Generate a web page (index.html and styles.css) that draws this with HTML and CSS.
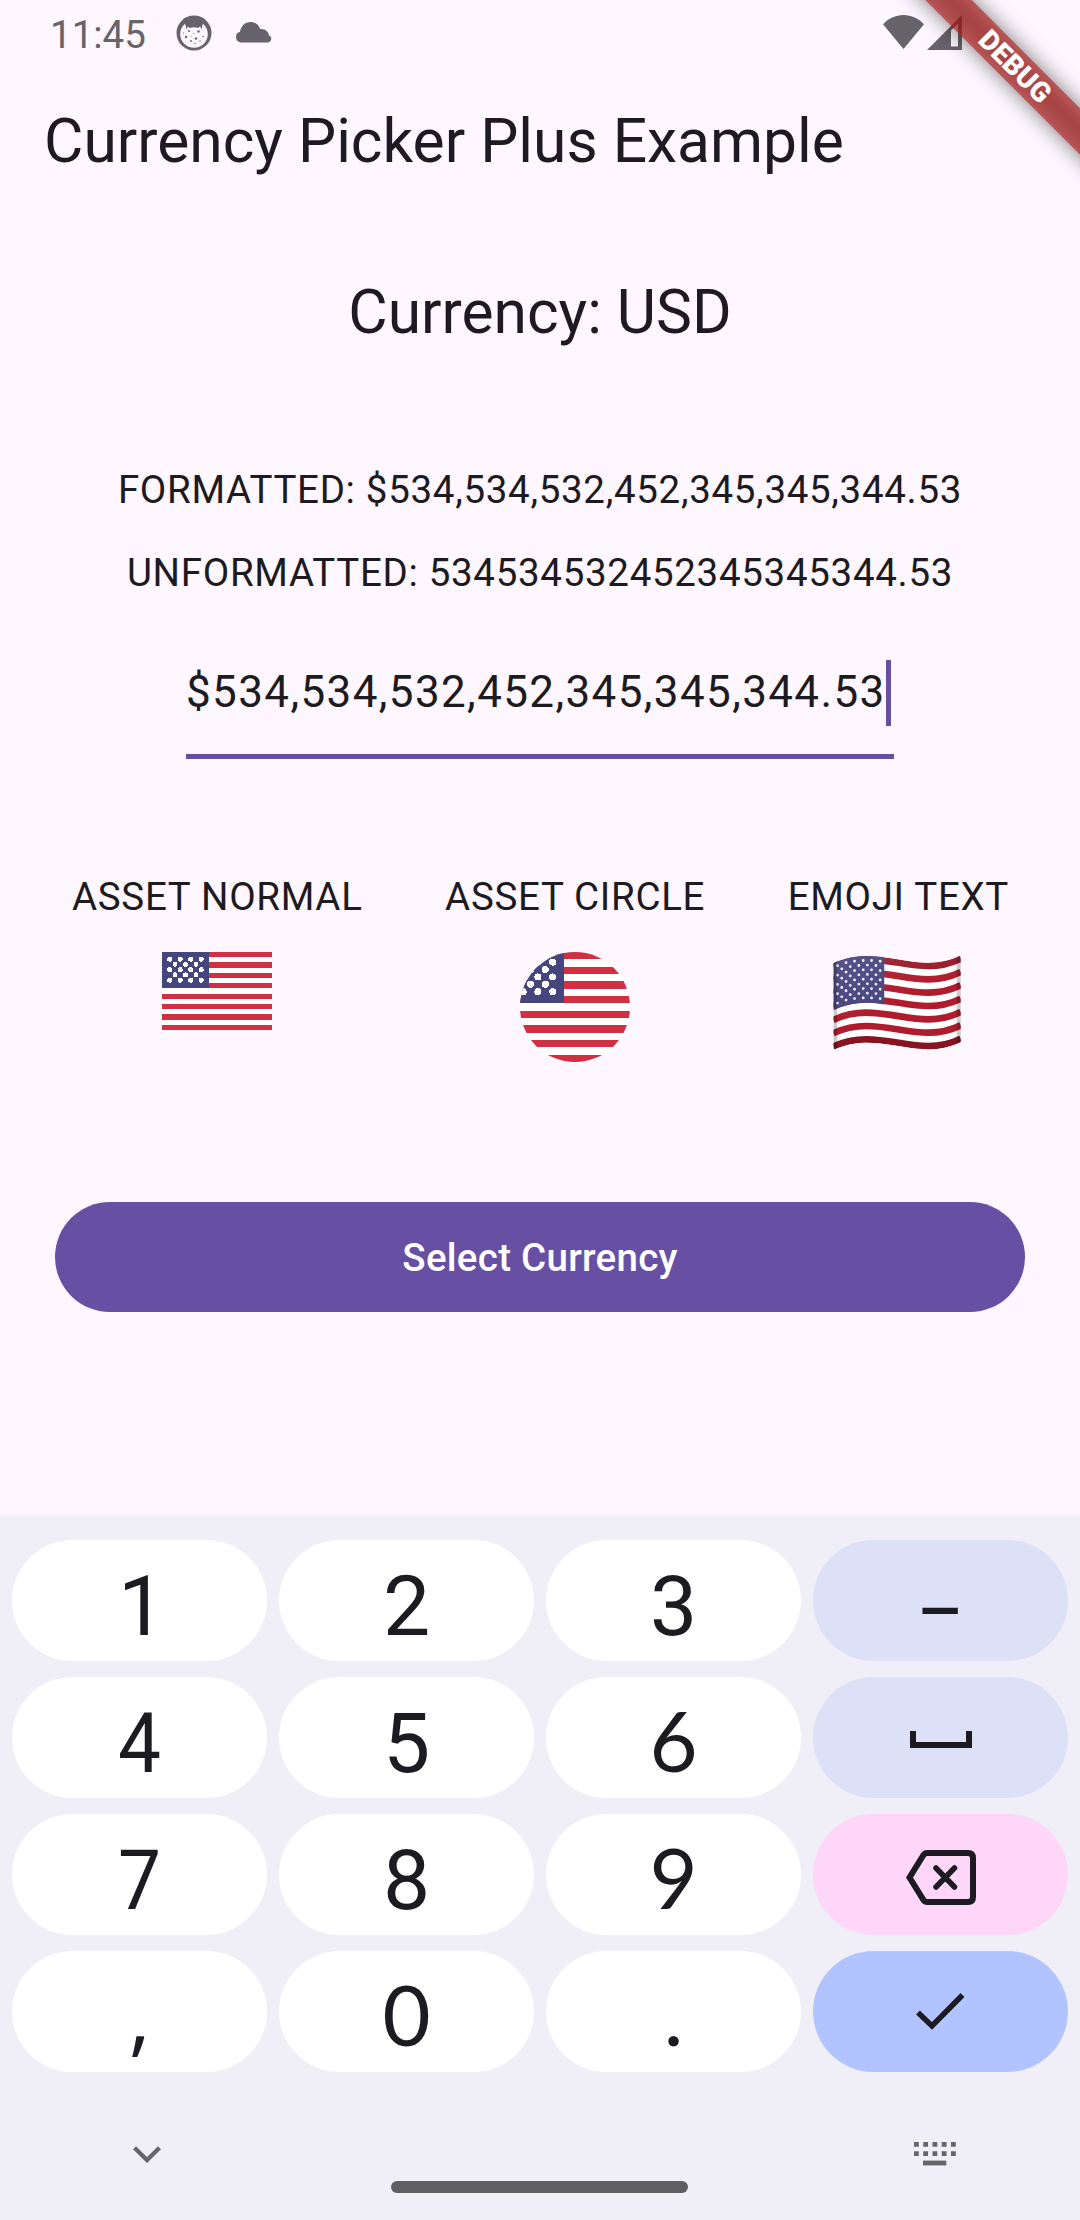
FILE: index.html
```html
<!DOCTYPE html>
<html lang="en">
<head>
<meta charset="utf-8">
<title>Currency Picker Plus Example</title>
<link rel="stylesheet" href="styles.css">
</head>
<body>
<svg class="defs" aria-hidden="true">
  <defs>
    <symbol id="us-flag" viewBox="0 0 110 78">
      <rect width="110" height="78" fill="#fff"/>
      <path d="M55 0V78" stroke="#d12f42" stroke-width="110" stroke-dasharray="5.2"/>
      <rect width="47" height="36.4" fill="#46467f"/>
      <g fill="none" stroke="#fff" stroke-width="5" stroke-linecap="round" stroke-dasharray="0 10.5">
        <path d="M7.7 7.2H40M7.7 17.7H40M7.7 28.2H40M13 12.4H34.5M13 22.9H34.5"/>
      </g>
    </symbol>
  </defs>
</svg>
<div class="screen">
  <main class="app">
    <header class="status">
      <span class="clock">11:45</span>
      <svg class="status-face" width="36" height="36" viewBox="0 0 36 36">
        <circle cx="18" cy="18" r="17.5" fill="#666468"/>
        <path d="M8.8 9c1.2.6 1.200 3 1.200 5.500l2-3 2 1.500c2.500-1 5.500-1 8 0l2-1.500 2 3c0-2.500 0-4.900 1.200-5.500C29.900 11.700 31.800 14.500 31.800 19A13.800 13.800 0 0 1 4.200 19C4.200 14.500 6.100 11.700 8.800 9z" fill="#fef7ff"/>
        <g fill="#666468"><circle cx="13" cy="16" r="1"/><circle cx="22.500" cy="16.500" r="1.200"/><circle cx="10" cy="22" r="1.200"/><circle cx="20" cy="23.500" r="1.200"/><circle cx="15" cy="26" r=".9"/><circle cx="18" cy="18.500" r=".6"/><circle cx="27" cy="21.500" r=".8"/><circle cx="15" cy="21" r=".6"/><circle cx="24" cy="26" r=".7"/><circle cx="19" cy="28.500" r=".7"/><circle cx="7.500" cy="18" r=".6"/></g>
      </svg>
      <svg class="status-cloud" width="38" height="21" viewBox="0 0 38 21">
        <path d="M5.500 20.500A5.500 5.500 0 0 1 5 9.800C6 4 10 0 15.500 0c4.500 0 8 2.500 9.700 7 5-.5 8.300 2.500 8.800 6.500A3.700 3.700 0 0 1 33.500 20.500z" fill="#666468"/>
      </svg>
      <svg class="status-wifi" width="41" height="34" viewBox="0 0 41 34">
        <path d="M20.500 34L0 9.200C5.500 3.500 12.500 0 20.500 0S35.500 3.500 41 9.200z" fill="#666468"/>
      </svg>
      <svg class="status-signal" width="35" height="35" viewBox="0 0 35 35">
        <path fill-rule="evenodd" d="M0 35L35 0V35zM24 15.500V31.500H31V8.500z" fill="#666468"/>
      </svg>
    </header>
    <h1 class="title">Currency Picker Plus Example</h1>
    <h2 class="currency">Currency: USD</h2>
    <div class="results">
      <p>FORMATTED: $534,534,532,452,345,345,344.53</p>
      <p>UNFORMATTED: 534534532452345345344.53</p>
    </div>
    <div class="field">
      <span class="value">$534,534,532,452,345,345,344.53</span><span class="caret"></span>
    </div>
    <section class="assets">
      <div class="asset">
        <span>ASSET NORMAL</span>
        <svg class="flag" width="110" height="78" shape-rendering="crispEdges"><use href="#us-flag"/></svg>
      </div>
      <div class="asset">
        <span>ASSET CIRCLE</span>
        <svg class="flag round" width="110" height="110" viewBox="16 0 78 78" shape-rendering="crispEdges"><use href="#us-flag" width="110" height="78"/></svg>
      </div>
      <div class="asset">
        <span>EMOJI TEXT</span>
        <svg class="flag wave" width="128" height="95" viewBox="0 0 127.500 95">
          <defs>
            <clipPath id="cloth"><path d="M0 8.300C10 3.500 22 1 33 1C55 1 75 7.700 95 7.700C108 7.700 118 5 127.500 .3V87C118 91.700 108 94.400 95 94.400C75 94.400 55 87.700 33 87.700C22 87.700 10 90.200 0 95z"/></clipPath>
            <path id="fold" d="M0 11.600C10 6.800 22 4.300 33 4.300C55 4.300 75 11 95 11C108 11 118 8.300 127.500 3.600" fill="none" stroke-width="6.670"/>
            <linearGradient id="shade" x1="0" y1="0" x2=".5" y2="1">
              <stop offset="0" stop-color="#fff" stop-opacity=".08"/><stop offset=".6" stop-color="#fff" stop-opacity="0"/>
            </linearGradient>
          </defs>
          <g clip-path="url(#cloth)">
            <rect width="128" height="95" fill="#fff"/>
            <g stroke="#b01c2e">
              <use href="#fold" stroke="#991b2b"/><use href="#fold" y="13.340"/><use href="#fold" y="26.680"/><use href="#fold" y="40.020"/><use href="#fold" y="53.360"/><use href="#fold" y="66.700"/><use href="#fold" y="80.040" stroke="#881321"/>
            </g>
            <path d="M0 0H51V49.500C45 48 39 47.700 33 47.700C22 47.700 10 50.200 0 55z" fill="#484680"/>
            <path d="M4.200 10.700v38M12.800 7.700v38M21.300 6.200v38M30 5.500v38M38.300 5.500v38M46.900 6.200v38M8.500 13.800v29M17 11.600v29M25.600 10.500v29M34.100 10.100v29M42.700 10.500v29" fill="none" stroke="#f4f2fb" stroke-width="2.800" stroke-linecap="round" stroke-dasharray="0 9.350"/>
            <rect width="128" height="95" fill="url(#shade)"/>
            <path d="M0 0H4V95H0zM123.500 0H128V95H123.500z" opacity=".2"/>
          </g>
        </svg>
      </div>
    </section>
    <button class="select">Select Currency</button>
    <div class="banner-corner">
      <div class="banner-shadow"></div>
      <div class="banner">DEBUG</div>
    </div>
  </main>
  <section class="keyboard">
    <div class="keys">
      <div class="key"><span class="one">1</span></div>
      <div class="key">2</div>
      <div class="key">3</div>
      <div class="key tint"><span class="dash">–</span></div>
      <div class="key"><span class="narrow">4</span></div>
      <div class="key">5</div>
      <div class="key"><span class="geo">6</span></div>
      <div class="key tint icon">
        <svg class="space" width="62" height="17" viewBox="0 0 62 17"><path d="M3 0V14H59V0" fill="none" stroke="#1b1b21" stroke-width="6"/></svg>
      </div>
      <div class="key"><span class="narrow">7</span></div>
      <div class="key">8</div>
      <div class="key"><span class="geo">9</span></div>
      <div class="key pink icon">
        <svg class="erase" width="70" height="56" viewBox="0 0 70 56">
          <g fill="none" stroke="#1b1b21" stroke-width="6">
            <path d="M21 3H62Q67 3 67 8V47Q67 52 62 52H21Q19 52 17.500 50L3.500 27.500L17.500 5Q19 3 21 3z"/>
            <path d="M30 18L48.500 37M48.500 18L30 37" stroke-width="5.500" stroke-linecap="round"/>
          </g>
        </svg>
      </div>
      <div class="key"><span class="comma">,</span></div>
      <div class="key"><span class="geo">0</span></div>
      <div class="key"><span class="geo">.</span></div>
      <div class="key blue icon">
        <svg width="49" height="37" viewBox="0 0 49 37"><path d="M2 19.500L16 33L46.500 2" fill="none" stroke="#1b1b21" stroke-width="5.500"/></svg>
      </div>
    </div>
    <footer class="nav">
      <svg class="chevron" width="28" height="17" viewBox="0 0 28 17"><path d="M1.500 1.700L14 14L26.500 1.700" fill="none" stroke="#666669" stroke-width="4.300"/></svg>
      <div class="home"></div>
      <svg class="layout" width="42" height="24" viewBox="0 0 42 24" fill="none" stroke="#666669" stroke-width="4.800">
        <path d="M0 2.400H42M0 11.700H42" stroke-dasharray="4.800 4.450"/>
        <path d="M9 21H32.300"/>
      </svg>
    </footer>
  </section>
</div>
</body>
</html>
```
FILE: styles.css
```css
* { box-sizing: border-box; }
body { margin: 0; background: #fef7ff; font-family: Roboto, "Liberation Sans", sans-serif; color: #1d1b20; }
h1, h2, p { margin: 0; font-weight: 400; }
svg { display: block; flex: none; }
.defs { width: 0; height: 0; position: absolute; }
.screen { width: 1080px; height: 2220px; overflow: hidden; display: flex; flex-direction: column; }

.app { position: relative; height: 1516px; display: flex; flex-direction: column; align-items: center; }
.status { width: 100%; height: 66px; padding-left: 50px; display: flex; align-items: flex-start; color: #666468; }
.clock { width: 126px; padding-top: 12px; font-size: 38.5px; line-height: 45px; }
.status-face { margin-top: 15px; }
.status-cloud { margin: 22px 0 0 23px; }
.status-wifi { margin: 15px 0 0 610px; }
.status-signal { margin: 15px 0 0 3px; }
.title { width: 100%; padding-left: 44px; margin-top: 37px; font-size: 60.5px; line-height: 77px; }
.currency { margin-top: 94px; font-size: 60.5px; line-height: 77px; }
.results { margin-top: 111px; display: flex; flex-direction: column; align-items: center; gap: 28px; font-size: 38.5px; line-height: 55px; letter-spacing: .6875px; }
.field { width: 708px; height: 99px; margin-top: 60px; border-bottom: 5px solid #6750a4; display: flex; font-size: 44px; line-height: 64px; letter-spacing: 1.375px; }
.value { width: 700px; white-space: nowrap; }
.caret { width: 5px; height: 66px; background: #6750a4; }
.assets { width: 100%; height: 193px; margin-top: 110px; padding: 0 71px 0 72px; display: flex; justify-content: space-between; }
.asset { display: flex; flex-direction: column; align-items: center; gap: 28px; font-size: 38.5px; line-height: 55px; letter-spacing: .6875px; }
.round { border-radius: 50%; }
.wave { margin: 3px 3px 0 0; }
.select { width: 970px; height: 110px; margin-top: 140px; border: 0; border-radius: 55px; background: #6750a4; color: #fff; font: 500 38.5px/55px Roboto, sans-serif; letter-spacing: .275px; }

.banner-corner { position: absolute; top: 0; right: 0; width: 250px; height: 250px; overflow: hidden; }
.banner, .banner-shadow { position: absolute; left: 4px; top: 49px; width: 360px; height: 33px; transform: rotate(45deg); }
.banner { background: rgba(183, 28, 28, .627); color: #fff; padding-left: 3px; text-align: center; font-size: 28px; font-weight: 900; line-height: 33px; }
.banner-shadow { background: rgba(0, 0, 0, .5); filter: blur(10.9px); }

.keyboard { height: 704px; padding: 24px 12px 0; background: #f0eff7; box-shadow: 0 -1px 4px #f6eaf4; display: flex; flex-direction: column; }
.keys { display: grid; grid-template-columns: repeat(4, 255px); grid-auto-rows: 121px; gap: 16px 12px; }
.key { border-radius: 61px; background: #fff; color: #1b1b21; text-align: center; font-size: 84px; line-height: 121px; padding-top: 6px; }
.key span { display: inline-block; line-height: 0; }
.geo { font-family: Lato, sans-serif; font-size: 83px; }
.comma { font-family: "Open Sans", sans-serif; }
.narrow { transform: scaleX(.91); }
.one { transform: translateX(2px); }
.dash { transform: translateY(6px) scaleX(.86); }
.tint { background: #dde1f8; }
.pink { background: #fdd6f8; }
.blue { background: #b2c4ff; }
.icon { display: flex; align-items: center; justify-content: center; padding: 0; }
.space { margin-top: 3px; }
.erase { margin-top: 6px; }
.nav { flex: 1; display: flex; align-items: flex-start; }
.chevron { margin: 74px 0 0 121px; }
.home { width: 297px; height: 12px; margin: 109px 0 0 230px; border-radius: 6px; background: #5f5f61; }
.layout { margin: 70px 0 0 226px; }
```
